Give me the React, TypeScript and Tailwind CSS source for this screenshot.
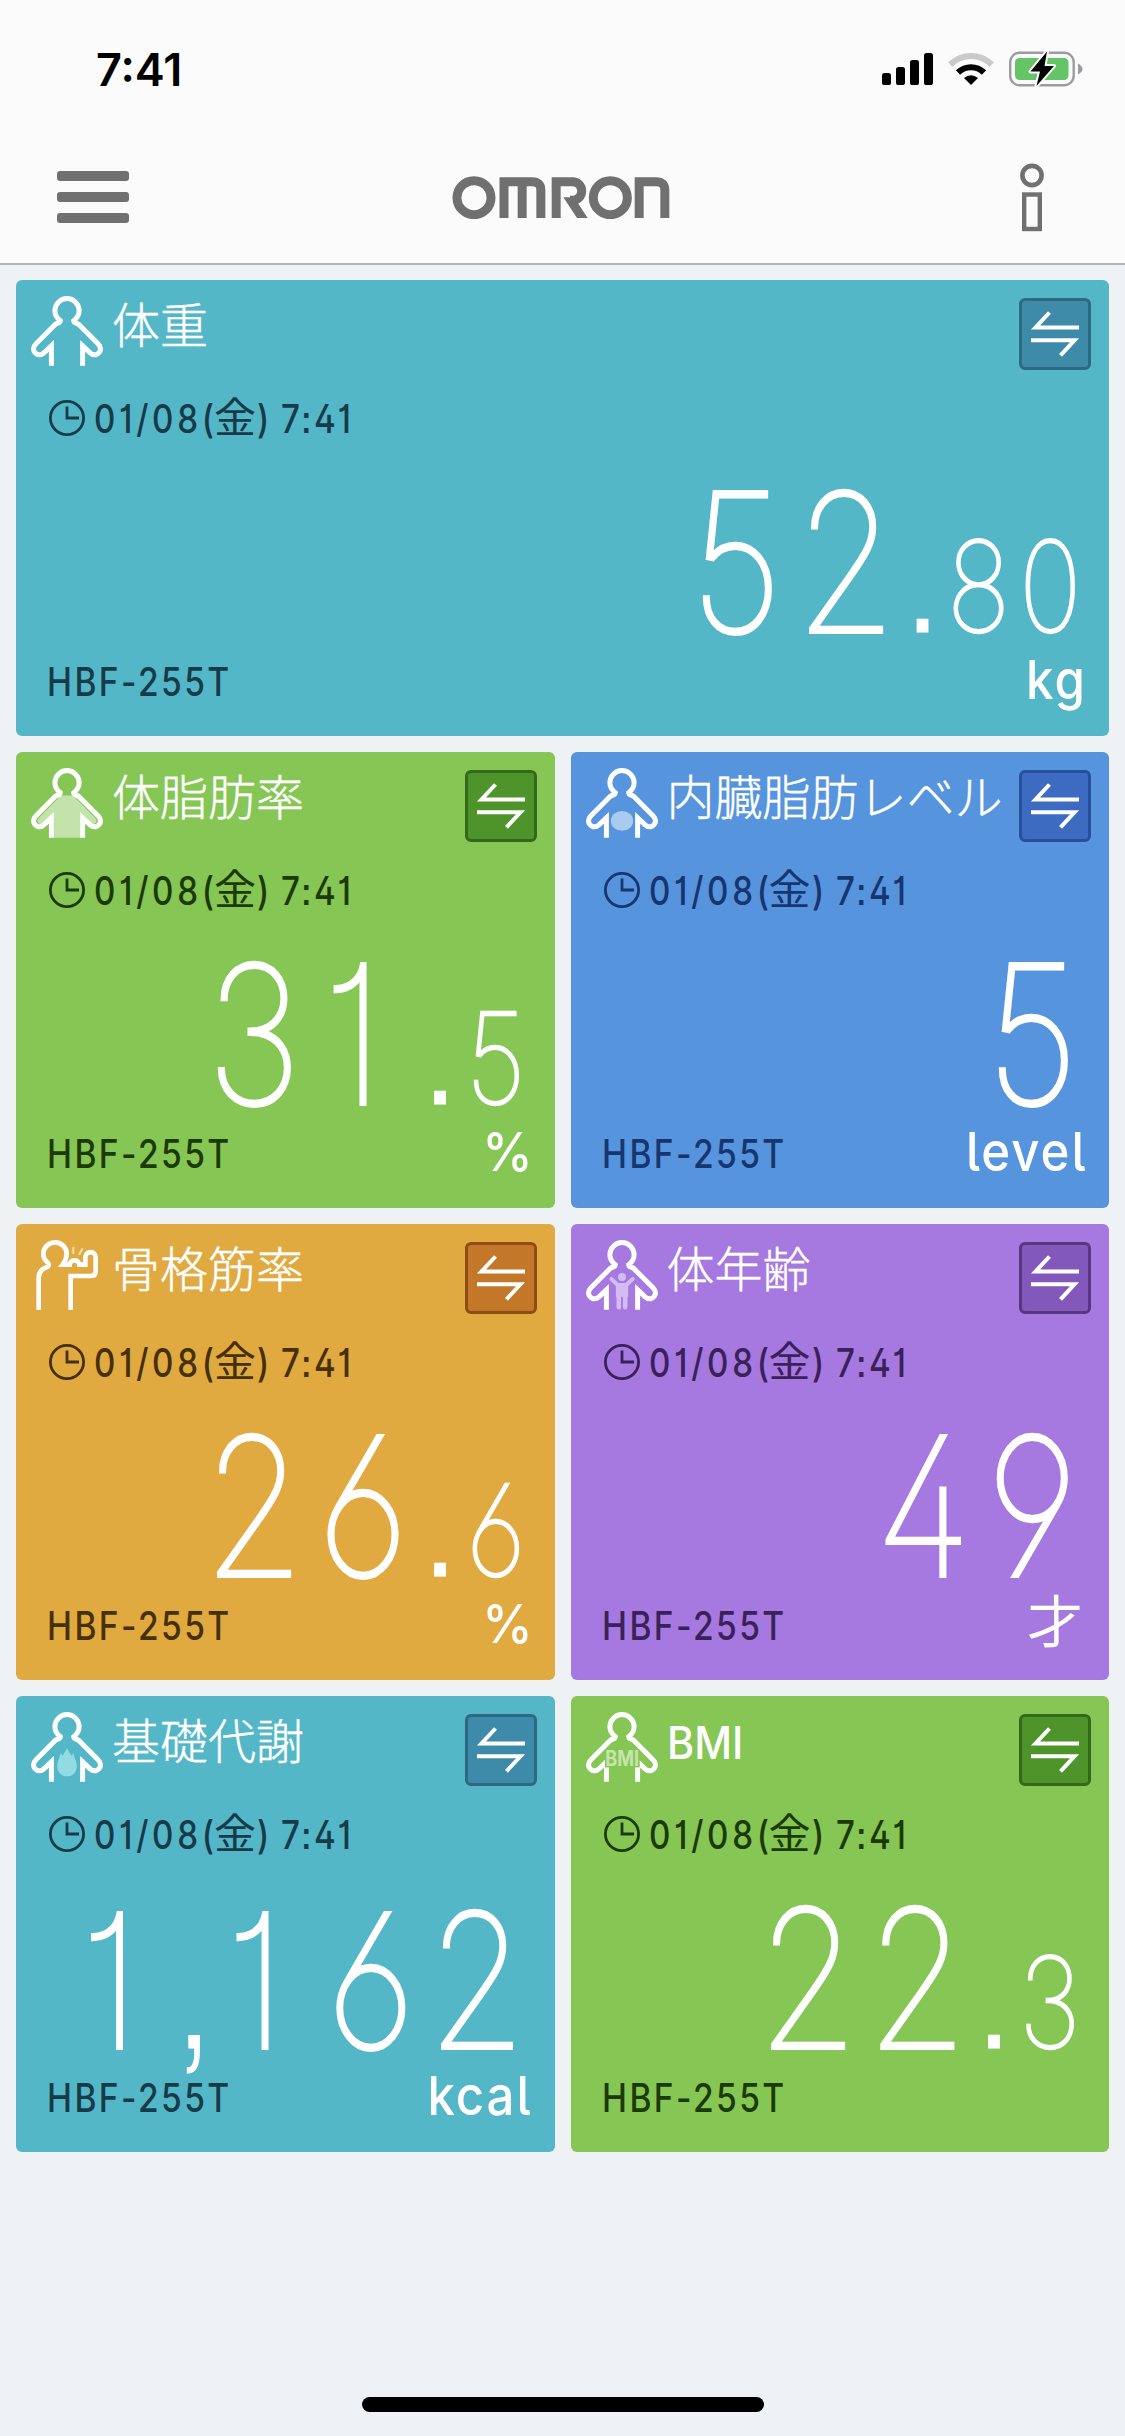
import type { ReactNode } from "react";

type Theme = { card: string; ink: string; button: string };

const teal: Theme = { card: "bg-[#54b7c8]", ink: "text-[#173b48]", button: "bg-[#3e8aa9] border-[#2d6983]" };
const green: Theme = { card: "bg-[#86c654]", ink: "text-[#1c3a08]", button: "bg-[#4f942a] border-[#33691a]" };
const blue: Theme = { card: "bg-[#5694de]", ink: "text-[#17356f]", button: "bg-[#3d6bc1] border-[#26509a]" };
const orange: Theme = { card: "bg-[#e1aa41]", ink: "text-[#463008]", button: "bg-[#c37829] border-[#8f4c15]" };
const purple: Theme = { card: "bg-[#a579e0]", ink: "text-[#3b2159]", button: "bg-[#8358bb] border-[#57377f]" };

const BODY =
  "M20.5 70V49.8L13 57C8.5 61 2.4 57.8 2.5 52.8C2.6 50.6 3.4 49.4 5 47.8L24.8 28C27 26.6 29.5 27 29.5 24.6C25.6 21.6 24 18.2 24 14.6A12.2 12.2 0 0 1 48.4 14.6C48.4 18.2 46.8 21.6 42.9 24.6C42.9 27 45.4 26.6 47.6 28L67.4 47.8C69 49.4 69.8 50.6 69.9 52.8C70 57.8 63.9 61 59.4 57L51.9 49.8V70";

function Person({ children }: { children?: ReactNode }) {
  return (
    <svg width="72" height="70" viewBox="0 0 72.4 70" fill="none">
      <path d={BODY} stroke="white" strokeWidth="5" strokeMiterlimit="6" />
      {children}
    </svg>
  );
}

function FatIcon() {
  return (
    <Person>
      <path
        d="M30 27.5H42.4L65 50.5C68 54 63 58.5 59 55L49.5 46.5V70H23V46.5L13.4 55C9.4 58.5 4.4 54 7.4 50.5Z"
        fill="white"
        fillOpacity="0.5"
      />
    </Person>
  );
}

function VisceralIcon() {
  return (
    <Person>
      <ellipse cx="36.2" cy="53" rx="11.2" ry="10" fill="white" fillOpacity="0.5" />
    </Person>
  );
}

function AgeIcon() {
  return (
    <Person>
      <g fill="#d2bcf0" stroke="#d2bcf0">
        <circle cx="36.2" cy="37" r="4" stroke="none" />
        <path d="M25.5 39L32 45M47 39L40.4 45" strokeWidth="4" strokeLinecap="round" />
        <path d="M30 43H42.4V57H30Z" stroke="none" />
        <path d="M33 55V67.500M39.4 55V67.500" strokeWidth="4.6" strokeLinecap="round" />
      </g>
    </Person>
  );
}

function FlameIcon() {
  return (
    <Person>
      <path
        d="M36.2 36C38 40 40 42 40.4 44L42.6 41C43.4 46 46 49 46 54C46 60 42 64.5 36.2 64.5C30.4 64.5 26.4 60 26.4 54C26.4 49 29 46 29.8 41L32 44C32.4 42 34.4 40 36.2 36Z"
        fill="#93dbe3"
      />
    </Person>
  );
}

function BmiIcon() {
  return (
    <Person>
      <rect x="19" y="38" width="35" height="17.500" fill="#86c654" />
      <text
        x="36.4"
        y="54"
        textAnchor="middle"
        textLength="34"
        lengthAdjust="spacingAndGlyphs"
        fontSize="21"
        fontWeight="700"
        fontFamily="Inter, sans-serif"
        fill="#c5e5ad"
      >
        BMI
      </text>
    </Person>
  );
}

function MuscleIcon() {
  return (
    <svg width="73" height="70" viewBox="33 30 219 210" fill="none" stroke="white" strokeWidth="14">
      <path d="M56 240V144C56 128 62 118 80 112C87 109 88 104 84 99C74 91 70 82 70 72A35 35 0 0 1 140 72C140 83 137 92 128 104H149C149 90 175 84 178 104H196V82A15.500 15.500 0 0 1 227 82V124Q227 138 213 138H152V240" />
      <path d="M160 50V72M188 55L177 74" strokeWidth="6" strokeOpacity="0.6" />
    </svg>
  );
}

function Clock() {
  return (
    <svg width="38" height="38" viewBox="0 0 38 38" fill="none" stroke="currentColor" strokeWidth="2.8">
      <circle cx="19" cy="19" r="16.600" />
      <path d="M19 7.500V19H31" />
    </svg>
  );
}

function SwapButton({ tone }: { tone: string }) {
  return (
    <button className={`mt-[18px] size-[72px] shrink-0 rounded-md border-[3px] ${tone}`}>
      <svg width="66" height="66" viewBox="3 3 66 66" fill="none" stroke="white" strokeWidth="4">
        <path d="M60 29.500H16.500L30.500 14.500M12 42.300H55.500L41.500 57.300" strokeMiterlimit="6" />
      </svg>
    </button>
  );
}

const DIN =
  "font-['Inter','Noto_Sans_CJK_JP',sans-serif] [font-feature-settings:'ss07','cv01','cv02','cv03','cv04','cv05']";

const POINT = "inline-block text-center font-extralight [-webkit-text-stroke:1px_white]";

// Each digit sits in an equal-width cell; a "1" leans towards the left of its cell.
function Digits({ value }: { value: string }) {
  return (
    <>
      {value.split("").map((ch, i) => (
        <span
          key={i}
          className={
            ch === ","
              ? `${POINT} w-[0.254em]`
              : ch === "1"
                ? "inline-block w-[0.677em] pr-[0.115em] text-center"
                : "inline-block w-[0.677em] text-center"
          }
        >
          {ch}
        </span>
      ))}
    </>
  );
}

type CardProps = {
  theme: Theme;
  icon: ReactNode;
  title: string;
  whole: string;
  fraction?: string;
  unit?: string;
  wide?: boolean;
};

function Card({ theme, icon, title, whole, fraction, unit, wide }: CardProps) {
  const cjkUnit = unit === "才";
  const latinTitle = title === "BMI";
  const long = whole.length > 3;
  return (
    <section
      className={`flex h-[456px] flex-col overflow-hidden rounded-md text-white ${theme.card} ${wide ? "col-span-2" : ""}`}
    >
      <header className="flex h-[116px] items-start pr-[18px] pl-[15px]">
        <div className="mt-4 w-[73px] shrink-0">{icon}</div>
        {latinTitle ? (
          <h2
            className={`mt-[21px] ml-[8px] flex-1 origin-left scale-x-[0.92] text-[45px] leading-[52px] font-[450] ${DIN}`}
          >
            {title}
          </h2>
        ) : (
          <h2 className="mt-[18px] ml-[8px] flex-1 font-['Noto_Sans_CJK_JP',sans-serif] text-[48px] leading-[48px] font-light whitespace-nowrap [-webkit-text-stroke:0.4px_white]">
            {title}
          </h2>
        )}
        <SwapButton tone={theme.button} />
      </header>

      <div
        className={`flex h-[44px] items-center pl-8 text-[39px] leading-none font-medium whitespace-nowrap ${theme.ink} ${DIN}`}
      >
        <Clock />
        <span className="ml-[8px] w-[120px] origin-left scale-x-[0.85] tracking-[4.3px]">01/08(</span>
        <span className="mt-[-7px] w-[43px] font-['Noto_Sans_CJK_JP',sans-serif] text-[42px] font-normal">金</span>
        <span className="w-[24px] origin-left scale-x-[0.85]">)</span>
        <span className="origin-left scale-x-[0.85] tracking-[3px]">7:41</span>
      </div>

      <div className={`mt-[23px] flex h-[188px] justify-end ${fraction ? "pr-[23px]" : "pr-[22px]"}`}>
        <div
          className={`mt-[3px] origin-right scale-x-[0.84] text-[192px] leading-none font-thin whitespace-nowrap [-webkit-text-stroke:4px_white] ${DIN}`}
        >
          <span className={long ? "mr-[4px] text-[186px]" : ""}>
            <Digits value={whole} />
          </span>
          {fraction && (
            <>
              <span className={`${POINT} w-[0.263em]`}>.</span>
              <span className="text-[126px] [-webkit-text-stroke:2.500px_white]">
                <Digits value={fraction} />
              </span>
            </>
          )}
        </div>
      </div>

      <footer className="flex items-start justify-between pr-[22px] pl-[31px]">
        <span
          className={`mt-[11px] origin-left scale-x-[0.86] text-[39px] leading-none font-medium tracking-[2.8px] ${theme.ink} ${DIN}`}
        >
          HBF-255T
        </span>
        {cjkUnit ? (
          <span className="mt-[-5px] mr-[4px] font-['Noto_Sans_CJK_JP',sans-serif] text-[56px] leading-none">{unit}</span>
        ) : (
          <span
            className={`origin-right text-[54px] leading-none font-[450] ${DIN} ${
              unit === "%" ? "mt-[2px] scale-x-[0.94]" : "mt-[2px] scale-x-[0.91] tracking-[2.2px]"
            }`}
          >
            {unit}
          </span>
        )}
      </footer>
    </section>
  );
}

function StatusBar() {
  return (
    <div className="flex h-[138px] items-center justify-between pr-[42px] pl-[96px]">
      <span className="font-['Inter',sans-serif] text-[45px] leading-none font-semibold text-black">7:41</span>
      <div className="flex items-center">
        <svg width="51" height="34" viewBox="0 0 51 34">
          <rect x="0" y="21" width="9" height="12" rx="2.600" />
          <rect x="14" y="15" width="9" height="18" rx="2.600" />
          <rect x="28" y="8" width="9" height="25" rx="2.600" />
          <rect x="42" y="1" width="9" height="32" rx="2.600" />
        </svg>
        <svg className="ml-[15px]" width="46" height="34" viewBox="0 0 46 34" fill="none">
          <path d="M2.200 12.500C14 1 32 1 43.800 12.500" stroke="#cacacb" strokeWidth="6" />
          <path d="M10 20.500C17.500 13.500 28.500 13.500 36 20.500" stroke="black" strokeWidth="6.200" />
          <path d="M23 33L16 26Q23 20.500 30 26Z" fill="black" />
        </svg>
        <svg className="ml-[15px]" width="74" height="40" viewBox="0 0 74 40">
          <rect x="1.200" y="3.700" width="63.500" height="32.600" rx="9.500" fill="none" stroke="#9c9c9f" strokeWidth="2.400" />
          <rect x="6" y="9" width="53.500" height="22" rx="4.500" fill="#65c466" />
          <path d="M69 14.500Q73.500 17 73.500 20T69 25.500Z" fill="#9c9c9f" />
          <path
            d="M38 2.500L21.500 22.500H31L27.500 37L45 17H35.500Z"
            fill="black"
            stroke="#fbfbfc"
            strokeWidth="4"
            paintOrder="stroke"
            strokeLinejoin="round"
          />
        </svg>
      </div>
    </div>
  );
}

function Logo() {
  return (
    <svg
      role="img"
      aria-label="OMRON"
      width="218"
      height="43"
      viewBox="38 49 654 129"
      fill="none"
      stroke="#707070"
      strokeWidth="27"
    >
      <circle cx="104" cy="114" r="51" />
      <path d="M194 175V66H278Q304.500 66 304.500 92V175M248.500 175V66" />
      <path d="M350.500 175V66H400A27 28 0 0 1 400 122H392" />
      <path d="M372 113H404L445 175H413Z" fill="#707070" stroke="none" />
      <circle cx="513" cy="114" r="51" />
      <path d="M599.500 175V66H650Q676.500 66 676.500 92V175" />
    </svg>
  );
}

function NavBar() {
  return (
    <div className="flex h-[118px] items-center justify-between pr-[81px] pl-[57px]">
      <button className="flex w-[72px] flex-col gap-[11px]" aria-label="menu">
        <span className="h-[10px] rounded-[3px] bg-[#707070]" />
        <span className="h-[10px] rounded-[3px] bg-[#707070]" />
        <span className="h-[10px] rounded-[3px] bg-[#707070]" />
      </button>
      <div className="ml-[-27px] pt-[1px]">
        <Logo />
      </div>
      <svg className="mt-[2px]" width="24" height="70" viewBox="0 0 24 70" fill="none" stroke="#707070">
        <circle cx="12" cy="12.500" r="9.600" strokeWidth="4.600" />
        <rect x="4.200" y="31.500" width="15.600" height="34.500" strokeWidth="4.400" />
      </svg>
    </div>
  );
}

export default function App() {
  return (
    <div className="flex h-[2436px] w-[1125px] flex-col bg-[#eef2f5]">
      <div className="h-[265px] border-b-2 border-[#b4b5b8] bg-[#fbfbfc]">
        <StatusBar />
        <NavBar />
      </div>
      <main className="grid grid-cols-2 gap-4 px-4 pt-[15px]">
        <Card wide theme={teal} icon={<Person />} title="体重" whole="52" fraction="80" unit="kg" />
        <Card theme={green} icon={<FatIcon />} title="体脂肪率" whole="31" fraction="5" unit="%" />
        <Card theme={blue} icon={<VisceralIcon />} title="内臓脂肪レベル" whole="5" unit="level" />
        <Card theme={orange} icon={<MuscleIcon />} title="骨格筋率" whole="26" fraction="6" unit="%" />
        <Card theme={purple} icon={<AgeIcon />} title="体年齢" whole="49" unit="才" />
        <Card theme={teal} icon={<FlameIcon />} title="基礎代謝" whole="1,162" unit="kcal" />
        <Card theme={green} icon={<BmiIcon />} title="BMI" whole="22" fraction="3" />
      </main>
      <div className="mt-auto mb-[24px] h-[15px] w-[402px] self-center rounded-full bg-black" />
    </div>
  );
}
